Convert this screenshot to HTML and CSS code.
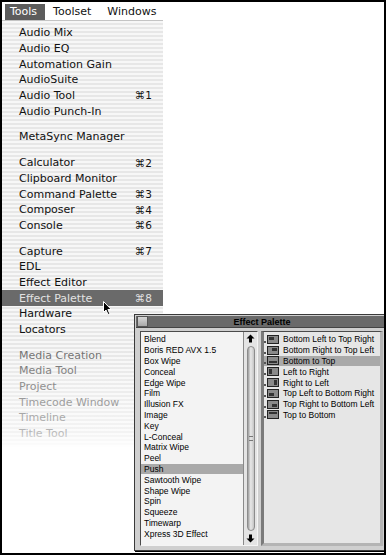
FILE: index.html
```html
<!DOCTYPE html>
<html lang="en">
<head>
  <meta charset="UTF-8" />
  <title>Tools menu and Effect Palette</title>
  <link rel="stylesheet" href="styles.css">
</head>
<body>
  <div class="screen">
    <div class="menubar">
      <span class="menubar-title is-open">Tools</span>
      <span class="menubar-title">Toolset</span>
      <span class="menubar-title">Windows</span>
    </div>

    <div class="menu">
      <div class="menu-item">Audio Mix</div>
      <div class="menu-item">Audio EQ</div>
      <div class="menu-item">Automation Gain</div>
      <div class="menu-item">AudioSuite</div>
      <div class="menu-item">Audio Tool <span class="key">⌘1</span></div>
      <div class="menu-item">Audio Punch-In</div>
      <div class="menu-sep"></div>
      <div class="menu-item">MetaSync Manager</div>
      <div class="menu-sep"></div>
      <div class="menu-item">Calculator <span class="key">⌘2</span></div>
      <div class="menu-item">Clipboard Monitor</div>
      <div class="menu-item">Command Palette <span class="key">⌘3</span></div>
      <div class="menu-item">Composer <span class="key">⌘4</span></div>
      <div class="menu-item">Console <span class="key">⌘6</span></div>
      <div class="menu-sep"></div>
      <div class="menu-item">Capture <span class="key">⌘7</span></div>
      <div class="menu-item">EDL</div>
      <div class="menu-item">Effect Editor</div>
      <div class="menu-item is-selected">Effect Palette <span class="key">⌘8</span></div>
      <div class="menu-item">Hardware</div>
      <div class="menu-item">Locators</div>
      <div class="menu-sep"></div>
      <div class="menu-item is-disabled">Media Creation</div>
      <div class="menu-item is-disabled">Media Tool</div>
      <div class="menu-item is-disabled">Project</div>
      <div class="menu-item is-disabled">Timecode Window</div>
      <div class="menu-item is-disabled">Timeline</div>
      <div class="menu-item is-disabled">Title Tool</div>
    </div>

    <!-- mouse pointer over the selected item -->
    <svg class="pointer" width="10" height="15" viewBox="0 0 10 15">
      <path d="M0.5 0.5 L0.5 11.5 L3 9 L5 13.5 L6.8 12.7 L4.9 8.5 L8.3 8.5 Z" fill="#000" stroke="#fff" stroke-width="1"/>
    </svg>

    <div class="palette">
      <div class="palette-title">
        <span class="close-box"></span>
        <span class="palette-name">Effect Palette</span>
      </div>
      <div class="palette-body">
        <div class="list categories">
          <ul class="list-items">
            <li>Blend</li>
            <li>Boris RED AVX 1.5</li>
            <li>Box Wipe</li>
            <li>Conceal</li>
            <li>Edge Wipe</li>
            <li>Film</li>
            <li>Illusion FX</li>
            <li>Image</li>
            <li>Key</li>
            <li>L-Conceal</li>
            <li>Matrix Wipe</li>
            <li>Peel</li>
            <li class="is-selected">Push</li>
            <li>Sawtooth Wipe</li>
            <li>Shape Wipe</li>
            <li>Spin</li>
            <li>Squeeze</li>
            <li>Timewarp</li>
            <li>Xpress 3D Effect</li>
          </ul>
          <div class="scrollbar">
            <svg class="arrow" width="9" height="9" viewBox="0 0 9 9">
              <path d="M4.5 0.5 L8.5 4.5 L6 4.5 L6 8.5 L3 8.5 L3 4.5 L0.5 4.5 Z" fill="#000"/>
            </svg>
            <div class="track">
              <div class="thumb"><span class="grip"></span></div>
            </div>
            <svg class="arrow" width="9" height="9" viewBox="0 0 9 9">
              <path d="M4.5 8.5 L8.5 4.5 L6 4.5 L6 0.5 L3 0.5 L3 4.5 L0.5 4.5 Z" fill="#000"/>
            </svg>
          </div>
        </div>

        <div class="list effects">
          <ul class="list-items">
            <li><svg class="fx-icon" width="16" height="9" viewBox="0 0 16 9"><rect x="0" y="6" width="2" height="2" fill="#555"/><rect x="3.5" y="0.5" width="11" height="8" fill="#8a8a8a" stroke="#222"/><rect x="5" y="2" width="5" height="3" fill="#333"/></svg>Bottom Left to Top Right</li>
            <li><svg class="fx-icon" width="16" height="9" viewBox="0 0 16 9"><rect x="0" y="6" width="2" height="2" fill="#555"/><rect x="3.5" y="0.5" width="11" height="8" fill="#8a8a8a" stroke="#222"/><rect x="8" y="2" width="5" height="3" fill="#333"/></svg>Bottom Right to Top Left</li>
            <li class="is-selected"><svg class="fx-icon" width="16" height="9" viewBox="0 0 16 9"><rect x="0" y="6" width="2" height="2" fill="#555"/><rect x="3.5" y="0.5" width="11" height="8" fill="#8a8a8a" stroke="#222"/><rect x="5" y="5" width="8" height="2" fill="#333"/></svg>Bottom to Top</li>
            <li><svg class="fx-icon" width="16" height="9" viewBox="0 0 16 9"><rect x="0" y="6" width="2" height="2" fill="#555"/><rect x="3.5" y="0.5" width="11" height="8" fill="#8a8a8a" stroke="#222"/><rect x="5" y="2" width="3" height="5" fill="#333"/></svg>Left to Right</li>
            <li><svg class="fx-icon" width="16" height="9" viewBox="0 0 16 9"><rect x="0" y="6" width="2" height="2" fill="#555"/><rect x="3.5" y="0.5" width="11" height="8" fill="#8a8a8a" stroke="#222"/><rect x="10" y="2" width="3" height="5" fill="#333"/></svg>Right to Left</li>
            <li><svg class="fx-icon" width="16" height="9" viewBox="0 0 16 9"><rect x="0" y="6" width="2" height="2" fill="#555"/><rect x="3.5" y="0.5" width="11" height="8" fill="#8a8a8a" stroke="#222"/><rect x="5" y="4" width="5" height="3" fill="#333"/></svg>Top Left to Bottom Right</li>
            <li><svg class="fx-icon" width="16" height="9" viewBox="0 0 16 9"><rect x="0" y="6" width="2" height="2" fill="#555"/><rect x="3.5" y="0.5" width="11" height="8" fill="#8a8a8a" stroke="#222"/><rect x="8" y="4" width="5" height="3" fill="#333"/></svg>Top Right to Bottom Left</li>
            <li><svg class="fx-icon" width="16" height="9" viewBox="0 0 16 9"><rect x="0" y="6" width="2" height="2" fill="#555"/><rect x="3.5" y="0.5" width="11" height="8" fill="#8a8a8a" stroke="#222"/><rect x="5" y="2" width="8" height="2" fill="#333"/></svg>Top to Bottom</li>
          </ul>
        </div>
      </div>
    </div>
  </div>
</body>
</html>
```

FILE: styles.css
```css
* {
  margin: 0;
  padding: 0;
  box-sizing: border-box;
}

body {
  background: #fff;
  font-family: "DejaVu Sans", sans-serif;
  color: #111;
}

.screen {
  position: relative;
  width: 386px;
  height: 555px;
  border: 2px solid #000;
  background: #fff;
  overflow: hidden;
}

/* menu bar */

.menubar {
  display: flex;
  height: 18px;
  padding: 2px 0 0 3px;
  font-size: 11px;
}

.menubar-title {
  padding: 0 8px;
  line-height: 16px;
}

.menubar-title:first-child {
  padding-left: 5px;
}

.menubar-title.is-open {
  background: #5c5c5c;
  color: #fff;
}

/* dropdown */

.menu {
  position: relative;
  width: 161px;
  padding: 4px 0 6px;
  border-top: 1px solid #c4c4c4;
  background: repeating-linear-gradient(to bottom, #f7f7f7 0, #f7f7f7 2px, #e7e7e7 2px, #e7e7e7 4px);
  font-size: 11px;
}

/* the menu fades out towards its bottom edge */
.menu::after {
  content: "";
  position: absolute;
  left: 0;
  right: 0;
  bottom: 0;
  height: 100px;
  background: linear-gradient(to bottom, rgba(255, 255, 255, 0), rgba(255, 255, 255, 0.5) 85%, rgba(255, 255, 255, 0.9));
}

.menu-item {
  display: flex;
  justify-content: space-between;
  align-items: center;
  height: 15.65px;
  padding: 0 11px 0 17px;
  white-space: nowrap;
}

.menu-item .key {
  font-size: 10.5px;
}

.menu-item.is-selected {
  background: #6a6a6a;
  color: #e2e2e2;
}

.menu-item.is-disabled {
  color: #6e6e6e;
}

.menu-sep {
  height: 10.25px;
}

.pointer {
  position: absolute;
  left: 101px;
  top: 299px;
}

/* effect palette window */

.palette {
  position: absolute;
  left: 132px;
  top: 312px;
  width: 252px;
  height: 237px;
  border: 1px solid #3a3a3a;
  background: #cfcfcf;
  box-shadow: 1px 1px 0 #000;
  display: flex;
  flex-direction: column;
  font-family: "Liberation Sans", Arial, sans-serif;
}

.palette-title {
  position: relative;
  display: flex;
  align-items: center;
  height: 12px;
  margin: 1px 1px 0;
  background: #6a6a6a;
  border-bottom: 1px solid #444;
}

.close-box {
  width: 11px;
  height: 11px;
  margin-left: 1px;
  background: linear-gradient(#d8d8d8, #a8a8a8);
  border: 1px solid #555;
}

.palette-name {
  flex: 1;
  text-align: center;
  font-size: 9px;
  font-weight: bold;
  color: #000;
  padding-right: 8px;
}

.palette-body {
  flex: 1;
  display: flex;
  gap: 3px;
  padding: 3px 2px 4px 5px;
}

.list {
  display: flex;
  height: 100%;
  border: 1px solid #4a4a4a;
  border-right-color: #f4f4f4;
  border-bottom-color: #f4f4f4;
}

.categories {
  width: 118px;
  background: #f3f3f3;
}

.effects {
  flex: 1;
  background: #e6e6e6;
  border-left-width: 3px;
  border-left-color: #7a7a7a;
  border-right: 3px solid #b4b4b4;
  border-bottom: 3px solid #b4b4b4;
}

.list-items {
  flex: 1;
  list-style: none;
  padding-top: 2px;
  font-size: 8.5px;
  color: #000;
  overflow: hidden;
}

.list-items li {
  display: flex;
  align-items: center;
  height: 10.8px;
  padding-left: 3px;
  white-space: nowrap;
}

.effects .list-items li {
  padding-left: 0;
}

.list-items li.is-selected {
  background: #a9a9a9;
}

.fx-icon {
  flex: none;
  margin-right: 3px;
}

/* scroll bar */

.scrollbar {
  width: 14px;
  display: flex;
  flex-direction: column;
  align-items: center;
  border-left: 1px solid #8a8a8a;
  background: #e4e4e4;
  padding: 2px 0;
}

.arrow {
  flex: none;
}

.track {
  flex: 1;
  width: 100%;
  display: flex;
  justify-content: center;
  padding: 3px 0;
}

.thumb {
  width: 8px;
  height: 100%;
  border-radius: 4px;
  border: 1px solid #8c8c8c;
  background: linear-gradient(to right, #9c9c9c, #e8e8e8 45%, #c4c4c4);
  display: flex;
  justify-content: center;
  align-items: center;
}

.grip {
  width: 4px;
  height: 5px;
  border-top: 1px solid #777;
  border-bottom: 1px solid #777;
}
```
